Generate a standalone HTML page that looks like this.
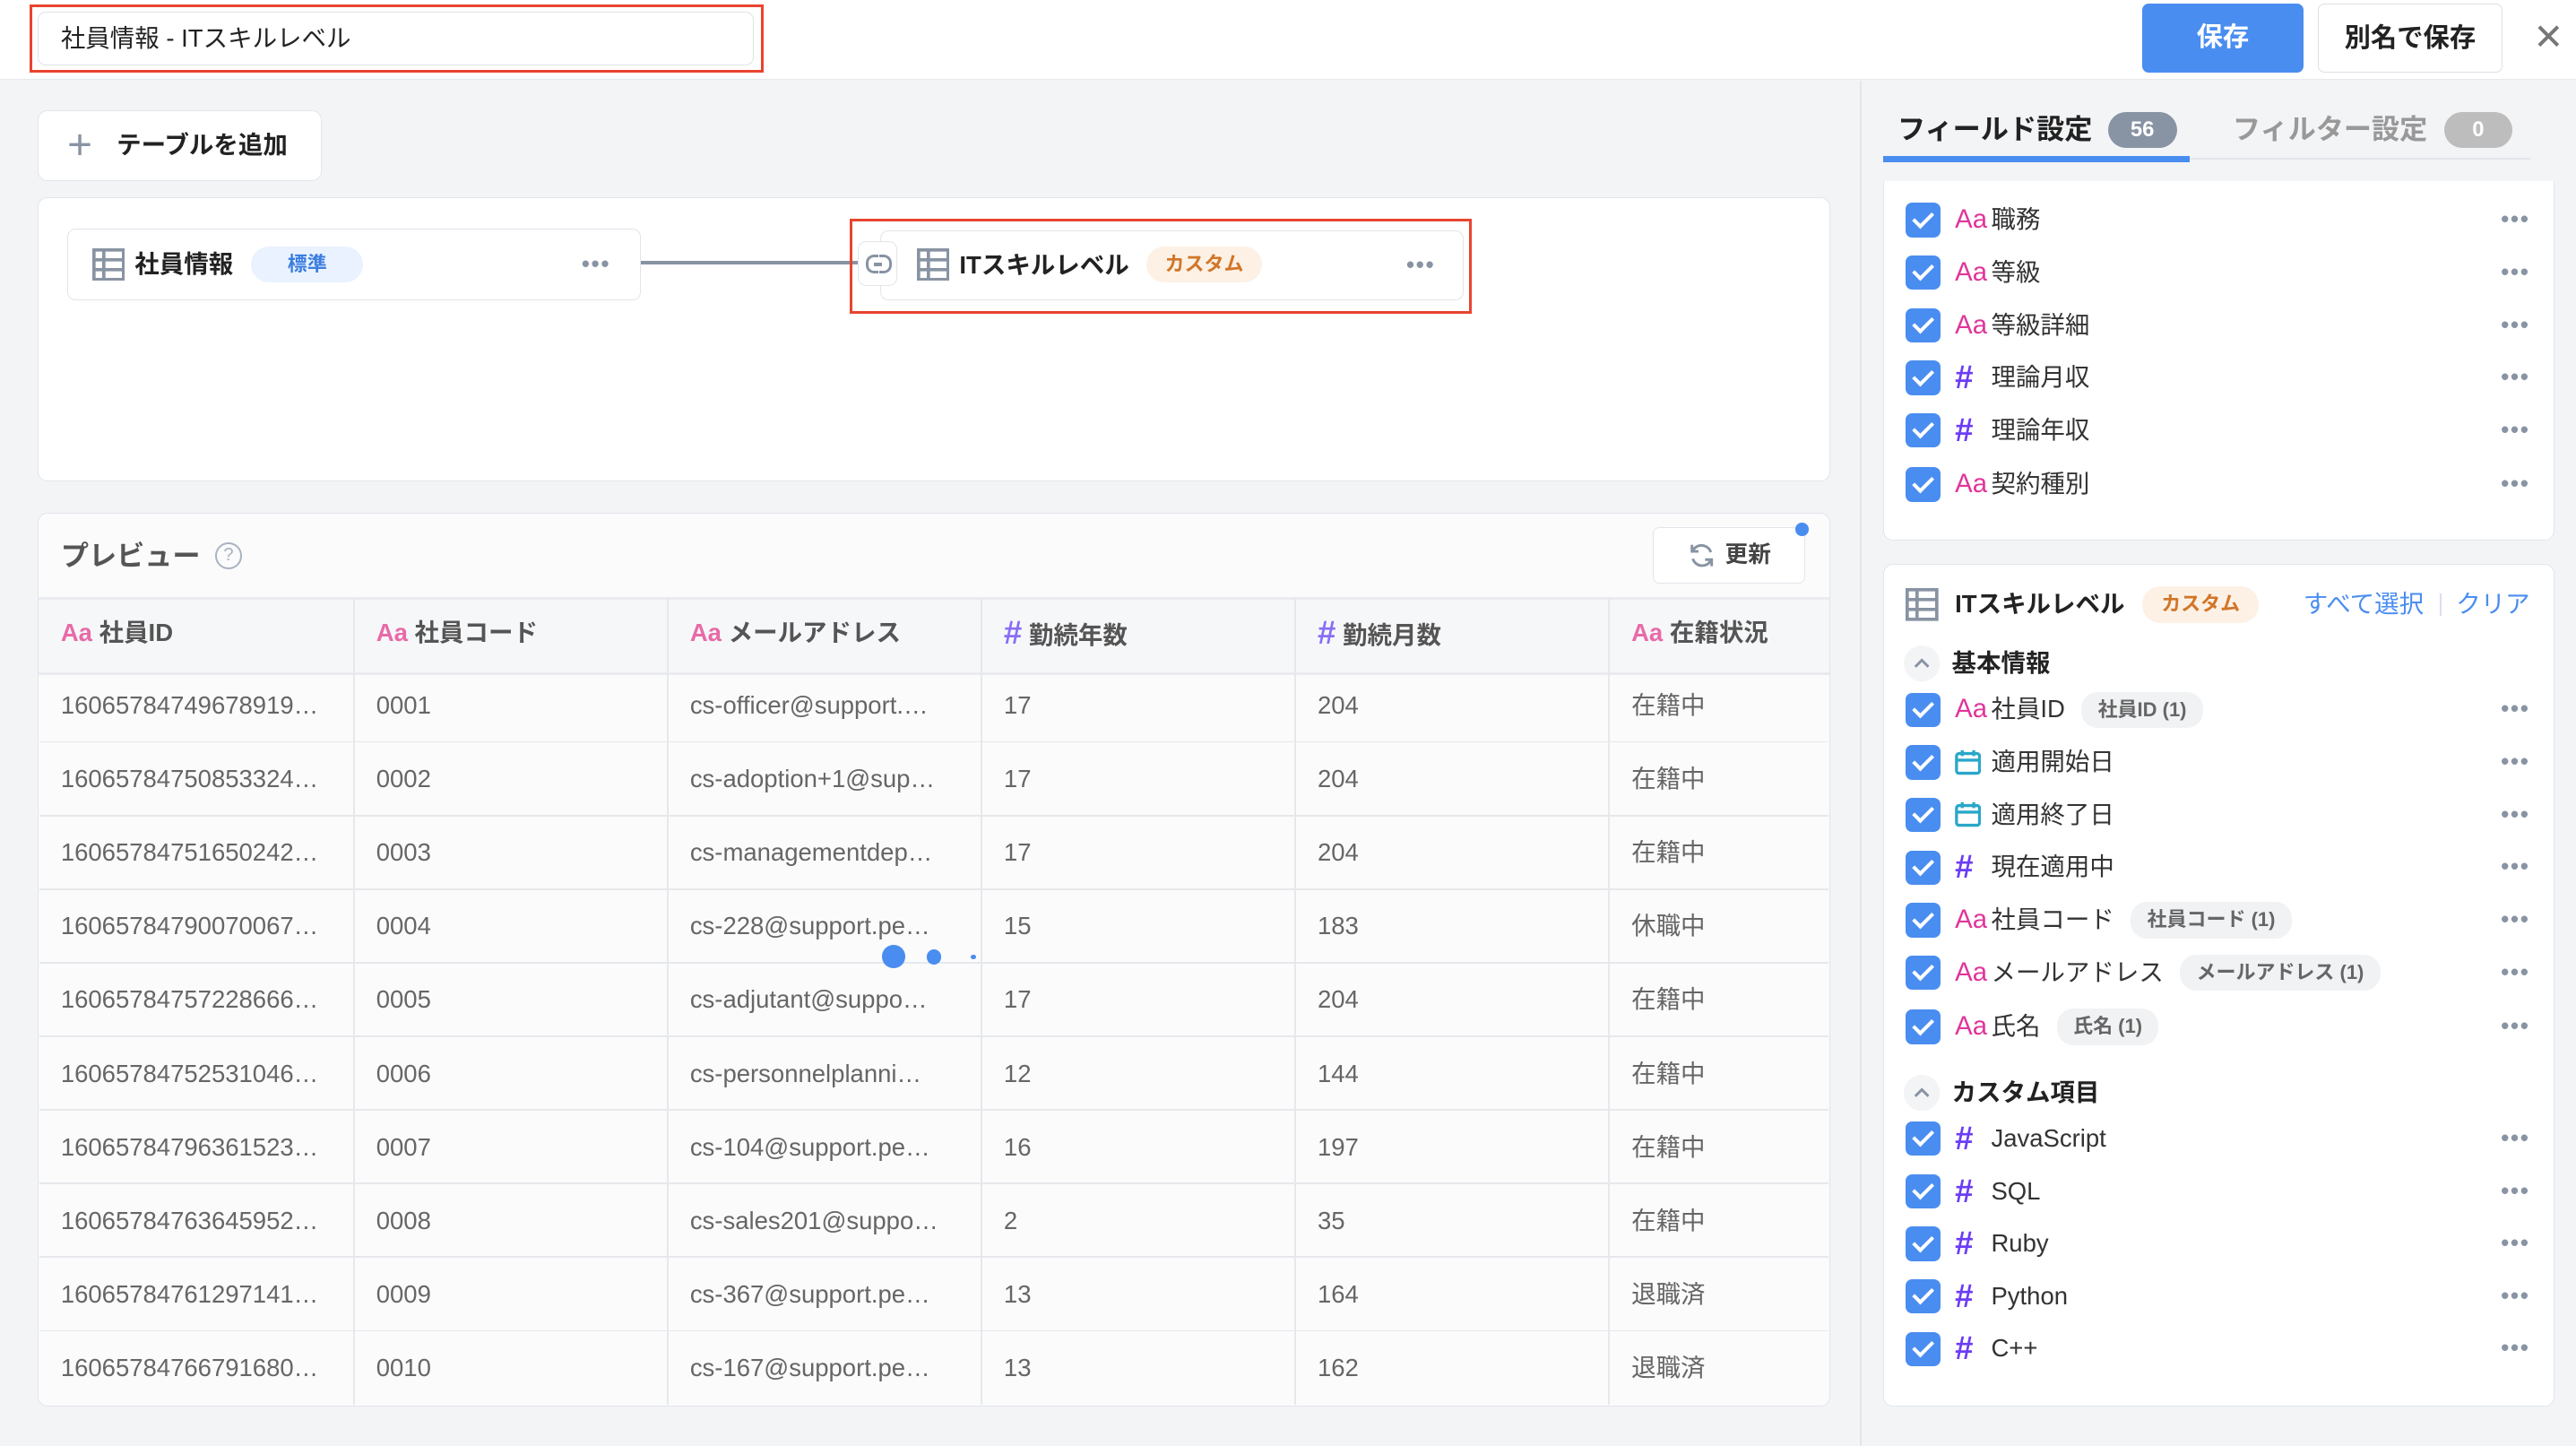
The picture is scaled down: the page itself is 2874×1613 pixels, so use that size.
<!DOCTYPE html>
<html><head><meta charset="utf-8">
<style>
html,body{margin:0;padding:0;}
body{width:2874px;height:1612px;overflow:hidden;background:#f3f4f6;}
#w{zoom:1.83291;width:1568px;height:880px;position:relative;font-family:"Liberation Sans","Noto Sans CJK JP",sans-serif;color:#222;}
.a{position:absolute;}
.card{position:absolute;background:#fff;border:1px solid #e2e5ea;border-radius:6px;box-sizing:border-box;}
.cb{position:relative;width:21px;height:21px;border-radius:4px;background:#4a8df0;flex:none;margin-right:9px;}
.cb:after{content:"";position:absolute;left:7px;top:3px;width:5px;height:10px;border:solid #fff;border-width:0 2.4px 2.4px 0;transform:rotate(45deg);}
.row{position:absolute;left:1160px;width:380px;height:32px;display:flex;align-items:center;}
.aa{color:#e0359a;font-size:16px;width:22px;flex:none;line-height:32px;}
.hs{color:#6b3df5;font-size:20px;font-weight:bold;width:22px;flex:none;line-height:32px;}
.lab{font-size:15px;color:#333;line-height:32px;white-space:nowrap;}
.dots{position:absolute;right:0;top:0;line-height:32px;color:#8893a3;font-size:14px;letter-spacing:1px;font-weight:bold;}
.dots2{position:absolute;color:#8893a3;font-size:14px;letter-spacing:1px;font-weight:bold;}
.tag{font-size:12px;color:#666;background:#f1f2f4;border-radius:10px;padding:0 10px;line-height:22px;font-weight:bold;margin-left:10px;}
.th{position:absolute;top:364px;height:43px;line-height:43px;font-size:15px;color:#555;font-weight:bold;}
.td{position:absolute;font-size:15px;color:#666;height:45px;line-height:45px;white-space:nowrap;}
</style></head><body><div id="w">
<div class="a" style="left:0;top:0;width:1568px;height:48px;background:#fff;border-bottom:1px solid #e6e8eb;"></div>
<div class="a" style="left:18px;top:3px;width:447px;height:41px;border:2px solid #e8442f;box-sizing:border-box;"></div>
<div class="a" style="left:23px;top:7px;width:436px;height:33px;border:1px solid #dfe2e6;border-radius:5px;box-sizing:border-box;"></div>
<div class="a" style="left:37px;top:7px;font-size:15px;line-height:33px;">社員情報 - ITスキルレベル</div>
<div class="a" style="left:1304px;top:2px;width:98px;height:42px;background:#4a8df0;border-radius:4px;color:#fff;font-size:16px;font-weight:bold;text-align:center;line-height:42px;">保存</div>
<div class="a" style="left:1411px;top:2px;width:112px;height:42px;border:1px solid #dcdfe4;border-radius:4px;box-sizing:border-box;font-size:16px;font-weight:bold;text-align:center;line-height:42px;">別名で保存</div>
<div class="a" style="left:1542px;top:10px;font-size:22px;color:#777;">✕</div>
<div class="a" style="left:1132px;top:49px;width:1px;height:831px;background:#e2e5ea;"></div>
<div class="card" style="left:23px;top:67px;width:173px;height:43px;"></div>
<div class="a" style="left:41px;top:67px;font-size:26px;line-height:43px;color:#8893a3;font-weight:300;">+</div>
<div class="a" style="left:71px;top:67px;line-height:43px;font-size:15px;font-weight:bold;">テーブルを追加</div>
<div class="card" style="left:23px;top:120px;width:1091px;height:173px;"></div>
<div class="card" style="left:41px;top:139px;width:349px;height:44px;border-radius:5px;"></div>
<svg class="a" style="left:56px;top:151px" width="20" height="20"><rect x="1" y="1" width="18" height="18" fill="none" stroke="#8893a3" stroke-width="2"/><path d="M1 7H19M1 13H19M7 1V19" stroke="#8893a3" stroke-width="2"/></svg>
<div class="a" style="left:82px;top:139px;line-height:44px;font-size:15px;font-weight:bold;">社員情報</div>
<div class="a" style="left:153px;top:150px;width:68px;height:22px;background:#e9f2fe;border-radius:11px;color:#3c7ee0;font-size:12px;font-weight:bold;text-align:center;line-height:22px;">標準</div>
<div class="dots2" style="left:354px;top:139px;line-height:44px;">•••</div>
<div class="a" style="left:390px;top:159px;width:133px;height:2px;background:#8893a3;"></div>
<div class="a" style="left:517px;top:133px;width:379px;height:58px;border:2px solid #e8442f;box-sizing:border-box;"></div>
<div class="card" style="left:536px;top:140px;width:355px;height:43px;border-radius:5px;"></div>
<div class="a" style="left:522px;top:147px;width:24px;height:27px;background:#fff;border:1px solid #e2e5ea;border-radius:5px;box-sizing:border-box;"></div>
<div class="a" style="left:527px;top:155px;width:6px;height:8px;border:2px solid #8893a3;border-right:none;border-radius:5px 0 0 5px;"></div>
<div class="a" style="left:535px;top:155px;width:6px;height:8px;border:2px solid #8893a3;border-left:none;border-radius:0 5px 5px 0;"></div>
<div class="a" style="left:532px;top:160px;width:5px;height:2px;background:#8893a3;"></div>
<svg class="a" style="left:558px;top:151px" width="20" height="20"><rect x="1" y="1" width="18" height="18" fill="none" stroke="#8893a3" stroke-width="2"/><path d="M1 7H19M1 13H19M7 1V19" stroke="#8893a3" stroke-width="2"/></svg>
<div class="a" style="left:584px;top:140px;line-height:43px;font-size:15px;font-weight:bold;">ITスキルレベル</div>
<div class="a" style="left:698px;top:150px;width:70px;height:22px;background:#fdf1e6;border-radius:11px;color:#d27628;font-size:12px;font-weight:bold;text-align:center;line-height:22px;">カスタム</div>
<div class="dots2" style="left:856px;top:140px;line-height:43px;">•••</div>
<div class="card" style="left:23px;top:312px;width:1091px;height:544px;background:#fbfbfc;overflow:hidden;">
<div class="a" style="left:0;top:51px;width:1091px;height:44px;background:#f6f7f9;border-top:2px solid #e9ebee;border-bottom:2px solid #e9ebee;"></div>
</div>
<div class="a" style="left:37px;top:322px;line-height:34px;font-size:17px;font-weight:bold;color:#555;">プレビュー</div>
<div class="a" style="left:131px;top:330px;width:14px;height:14px;border:1.5px solid #aab3c0;border-radius:50%;color:#aab3c0;font-size:11px;text-align:center;line-height:14px;">?</div>
<div class="a" style="left:1006px;top:321px;width:93px;height:34px;border:1px solid #e2e5ea;border-radius:4px;background:#fff;box-sizing:border-box;"></div>
<svg class="a" style="left:1028px;top:330px" width="16" height="16"><path d="M13.5 6A6 6 0 0 0 2.5 5M2.5 10A6 6 0 0 0 13.5 11" fill="none" stroke="#8893a3" stroke-width="1.6"/><path d="M2 1.5V5.5H6M14 14.5V10.5H10" fill="none" stroke="#8893a3" stroke-width="1.6"/></svg>
<div class="a" style="left:1050px;top:321px;line-height:34px;font-size:14px;color:#444;font-weight:bold;">更新</div>
<div class="a" style="left:1093px;top:318px;width:8px;height:8px;border-radius:50%;background:#4a8df0;"></div>
<div class="th" style="left:37px;"><span style="color:#e86aa8">Aa</span> 社員ID</div>
<div class="th" style="left:229px;"><span style="color:#e86aa8">Aa</span> 社員コード</div>
<div class="th" style="left:420px;"><span style="color:#e86aa8">Aa</span> メールアドレス</div>
<div class="th" style="left:611px;"><span style="color:#8a6df5;font-size:20px">#</span> 勤続年数</div>
<div class="th" style="left:802px;"><span style="color:#8a6df5;font-size:20px">#</span> 勤続月数</div>
<div class="th" style="left:993px;"><span style="color:#e86aa8">Aa</span> 在籍状況</div>
<div class="a" style="left:215px;top:364px;width:1px;height:491px;background:#e6e8eb;"></div>
<div class="a" style="left:406px;top:364px;width:1px;height:491px;background:#e6e8eb;"></div>
<div class="a" style="left:597px;top:364px;width:1px;height:491px;background:#e6e8eb;"></div>
<div class="a" style="left:788px;top:364px;width:1px;height:491px;background:#e6e8eb;"></div>
<div class="a" style="left:979px;top:364px;width:1px;height:491px;background:#e6e8eb;"></div>
<div id="rows"></div>
<div class="a" style="left:537px;top:575px;width:14px;height:14px;border-radius:50%;background:#4a8df0;"></div>
<div class="a" style="left:564px;top:578px;width:9px;height:9px;border-radius:50%;background:#4a8df0;"></div>
<div class="a" style="left:591px;top:581px;width:3px;height:3px;border-radius:50%;background:#4a8df0;"></div>
<div class="a" style="left:1155px;top:62px;line-height:34px;font-size:17px;font-weight:bold;">フィールド設定</div>
<div class="a" style="left:1283px;top:68px;width:42px;height:22px;border-radius:11px;background:#8893a3;color:#fff;font-size:13px;font-weight:bold;text-align:center;line-height:22px;">56</div>
<div class="a" style="left:1359px;top:62px;line-height:34px;font-size:17px;font-weight:bold;color:#999;">フィルター設定</div>
<div class="a" style="left:1488px;top:68px;width:41px;height:22px;border-radius:11px;background:#bdbdbd;color:#fff;font-size:13px;font-weight:bold;text-align:center;line-height:22px;">0</div>
<div class="a" style="left:1146px;top:96px;width:394px;height:1px;background:#e2e5ea;"></div>
<div class="a" style="left:1146px;top:95px;width:187px;height:4px;background:#4a8df0;"></div>
<div class="card" style="left:1146px;top:110px;width:409px;height:219px;border-top:none;border-radius:0 0 6px 6px;"></div>
<div class="card" style="left:1146px;top:343px;width:409px;height:513px;"></div>
<svg class="a" style="left:1160px;top:358px" width="20" height="20"><rect x="1" y="1" width="18" height="18" fill="none" stroke="#8893a3" stroke-width="2"/><path d="M1 7H19M1 13H19M7 1V19" stroke="#8893a3" stroke-width="2"/></svg>
<div class="a" style="left:1190px;top:352px;line-height:32px;font-size:15px;font-weight:bold;">ITスキルレベル</div>
<div class="a" style="left:1304px;top:357px;width:71px;height:22px;background:#fdf1e6;border-radius:11px;color:#d27628;font-size:12px;font-weight:bold;text-align:center;line-height:22px;">カスタム</div>
<div class="a" style="left:1402px;top:352px;line-height:32px;font-size:15px;color:#4a8df0;">すべて選択</div>
<div class="a" style="left:1485px;top:361px;width:1px;height:14px;background:#dde;"></div>
<div class="a" style="left:1495px;top:352px;line-height:32px;font-size:15px;color:#4a8df0;">クリア</div>
<svg class="a" style="left:1159px;top:393px" width="22" height="22"><circle cx="11" cy="11" r="11" fill="#f3f4f6"/><path d="M7 13L11 9L15 13" fill="none" stroke="#8893a3" stroke-width="1.6"/></svg>
<div class="a" style="left:1188px;top:388px;line-height:32px;font-size:15px;font-weight:bold;">基本情報</div>
<svg class="a" style="left:1159px;top:654px" width="22" height="22"><circle cx="11" cy="11" r="11" fill="#f3f4f6"/><path d="M7 13L11 9L15 13" fill="none" stroke="#8893a3" stroke-width="1.6"/></svg>
<div class="a" style="left:1188px;top:649px;line-height:32px;font-size:15px;font-weight:bold;">カスタム項目</div>
<div id="fl"></div>
</div>
<script>
var R=[["16065784749678919…","0001","cs-officer@support.…","17","204","在籍中"],
["16065784750853324…","0002","cs-adoption+1@sup…","17","204","在籍中"],
["16065784751650242…","0003","cs-managementdep…","17","204","在籍中"],
["16065784790070067…","0004","cs-228@support.pe…","15","183","休職中"],
["16065784757228666…","0005","cs-adjutant@suppo…","17","204","在籍中"],
["16065784752531046…","0006","cs-personnelplanni…","12","144","在籍中"],
["16065784796361523…","0007","cs-104@support.pe…","16","197","在籍中"],
["16065784763645952…","0008","cs-sales201@suppo…","2","35","在籍中"],
["16065784761297141…","0009","cs-367@support.pe…","13","164","退職済"],
["16065784766791680…","0010","cs-167@support.pe…","13","162","退職済"]];
var X=[37,229,420,611,802,993],h="";
for(var i=0;i<10;i++){var y=407+i*44.8;
if(i<9)h+='<div class="a" style="left:24px;top:'+(y+44)+'px;width:1089px;height:1px;background:#e6e8eb"></div>';
for(var j=0;j<6;j++)h+='<div class="td" style="left:'+X[j]+'px;top:'+y+'px">'+R[i][j]+'</div>';}
document.getElementById("rows").innerHTML=h;
var F=[[134,"a","職務"],[166,"a","等級"],[198,"a","等級詳細"],[230,"h","理論月収"],[262,"h","理論年収"],[295,"a","契約種別"],
[432,"a","社員ID","社員ID (1)"],[464,"c","適用開始日"],[496,"c","適用終了日"],[528,"h","現在適用中"],[560,"a","社員コード","社員コード (1)"],[592,"a","メールアドレス","メールアドレス (1)"],[625,"a","氏名","氏名 (1)"],
[693,"h","JavaScript"],[725,"h","SQL"],[757,"h","Ruby"],[789,"h","Python"],[821,"h","C++"]];
h="";
for(var k=0;k<F.length;k++){var f=F[k],y=f[0];
h+='<div class="row" style="top:'+(y-16)+'px"><div class="cb"></div>';
if(f[1]=="a")h+='<div class="aa">Aa</div>';
else if(f[1]=="h")h+='<div class="hs">#</div>';
else h+='<div style="width:22px;flex:none;height:16px"><svg width="16" height="16"><rect x="1" y="2.5" width="14" height="12" rx="1.5" fill="none" stroke="#2aa7c9" stroke-width="1.8"/><path d="M1 6.5H15M4.5 0.5V4M11.5 0.5V4" stroke="#2aa7c9" stroke-width="1.8"/></svg></div>';
h+='<div class="lab">'+f[2]+'</div>';
if(f[3])h+='<div class="tag">'+f[3]+'</div>';
h+='<div class="dots">•••</div></div>';}
document.getElementById("fl").innerHTML=h;
</script>
</body></html>
